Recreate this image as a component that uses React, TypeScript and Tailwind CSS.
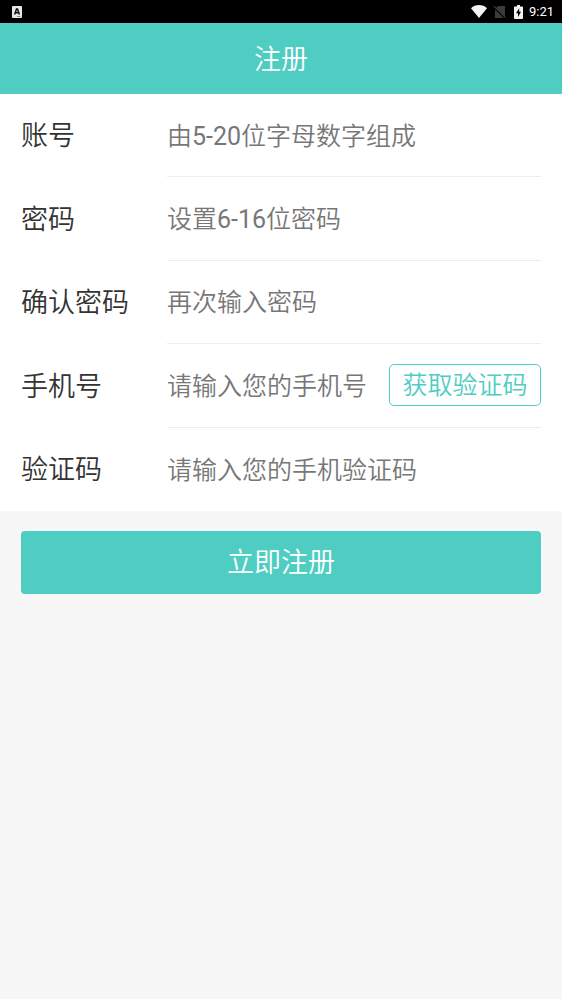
import { useState } from 'react';

type Field = {
  id: string;
  label: string;
  placeholder: string;
  type: string;
};

const fields: Field[] = [
  { id: 'account', label: '账号', placeholder: '由5-20位字母数字组成', type: 'text' },
  { id: 'password', label: '密码', placeholder: '设置6-16位密码', type: 'password' },
  { id: 'confirm', label: '确认密码', placeholder: '再次输入密码', type: 'password' },
  { id: 'phone', label: '手机号', placeholder: '请输入您的手机号', type: 'tel' },
  { id: 'code', label: '验证码', placeholder: '请输入您的手机验证码', type: 'text' },
];

function StatusBar() {
  return (
    <div className="flex h-[23px] items-center bg-black pl-3 pr-2 text-white">
      <svg width="10" height="12" viewBox="0 0 10 12" aria-hidden="true">
        <rect width="10" height="12" rx="1" fill="#e8e8e8" />
        <path d="M2.6 8.6 4.5 3h1l1.9 5.6M3.4 6.8h3.2" fill="none" stroke="#111" strokeWidth="1.5" />
        <path d="M5 10.5h3.5" stroke="#777" strokeWidth="0.8" />
      </svg>
      <div className="ml-auto flex items-center">
        <svg width="16" height="13" viewBox="0 0 16 13" aria-hidden="true">
          <path d="M8 13 0 3.2C2.2 1.2 5 0 8 0s5.8 1.2 8 3.2z" fill="#f2f2f2" />
        </svg>
        <svg className="ml-1.5" width="13" height="14" viewBox="0 0 13 14" aria-hidden="true">
          <path d="M5 1h7v12H2V4z" fill="#3c3c3c" />
          <path d="M0.5 1.5 12.5 13.5" stroke="#000" strokeWidth="2" />
          <path d="M0.5 0.8 12.5 12.8" stroke="#555" strokeWidth="1" />
        </svg>
        <svg className="ml-2" width="9" height="14" viewBox="0 0 9 14" aria-hidden="true">
          <path d="M3 0h3v1.5h2.2c.5 0 .8.3.8.8v10.9c0 .5-.3.8-.8.8H.8c-.5 0-.8-.3-.8-.8V2.3c0-.5.3-.8.8-.8H3z" fill="#f2f2f2" />
          <path d="M5.2 3.2 2 8.3h2v3.6L7 6.8H5.2z" fill="#000" />
        </svg>
        <span className="ml-1.5 font-[Roboto] text-[13px] leading-none">9:21</span>
      </div>
    </div>
  );
}

export default function App() {
  const [values, setValues] = useState<Record<string, string>>({});

  return (
    <div className="min-h-screen bg-[#f7f7f7] font-[Roboto,'Noto_Sans_CJK_SC_DemiLight','Noto_Sans_CJK_SC',sans-serif]">
      <StatusBar />
      <header className="flex h-[71px] items-center justify-center bg-[#4fcdc3] pt-1">
        <h1 className="text-[27px] text-white">注册</h1>
      </header>

      <form onSubmit={(e) => e.preventDefault()}>
        <div className="grid min-h-[417px] auto-rows-fr grid-cols-1 bg-white px-[21px]">
          {fields.map((field) => (
            <div key={field.id} className="group flex min-w-0">
              <label
                htmlFor={field.id}
                className="flex w-[146px] shrink-0 items-center pt-0.5 text-[27px] text-[#333]"
              >
                {field.label}
              </label>
              <div className="flex min-w-0 flex-1 items-center border-b border-[#ececec] group-last:border-0">
                <input
                  id={field.id}
                  type={field.type}
                  placeholder={field.placeholder}
                  value={values[field.id] ?? ''}
                  onChange={(e) => setValues({ ...values, [field.id]: e.target.value })}
                  className="h-full min-w-0 flex-1 bg-transparent pt-0.5 text-[25px] text-[#333] outline-none placeholder:text-[#777]"
                />
                {field.id === 'phone' && (
                  <button
                    type="button"
                    className="h-[42px] w-[152px] shrink-0 rounded-[5px] border border-[#4fcdc3] text-[25px] leading-none text-[#4fcdc3]"
                  >
                    获取验证码
                  </button>
                )}
              </div>
            </div>
          ))}
        </div>

        <div className="px-[21px] py-5">
          <button type="submit" className="h-[63px] w-full rounded-[4px] bg-[#4fcdc3] pt-0.5 text-[27px] text-white">
            立即注册
          </button>
        </div>
      </form>
    </div>
  );
}
